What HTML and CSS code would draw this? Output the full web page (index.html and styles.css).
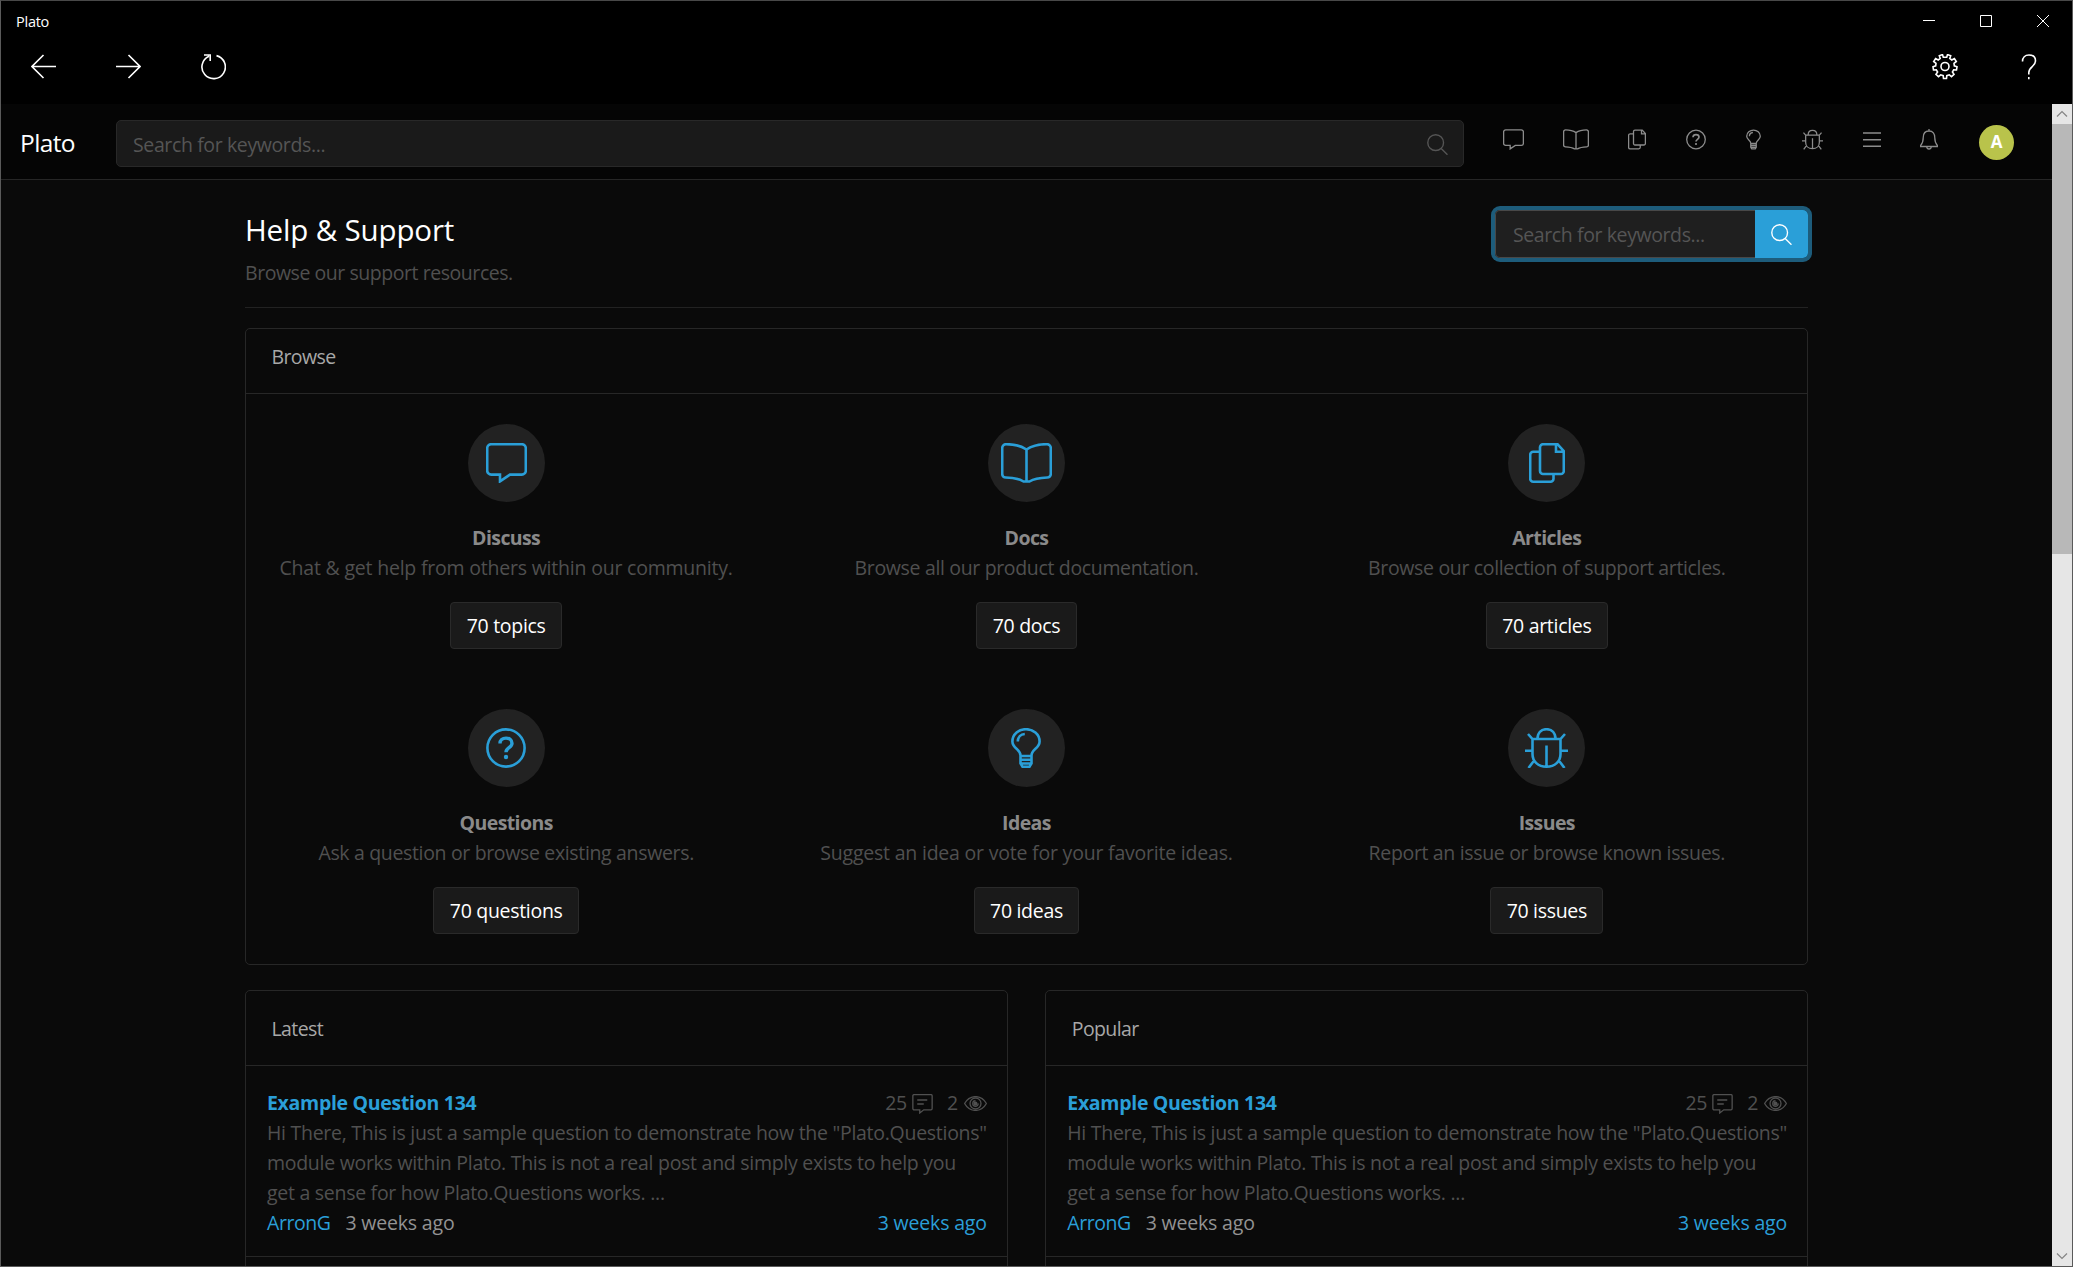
FILE: index.html
```html
<!DOCTYPE html>
<html lang="en">
<head>
<meta charset="utf-8">
<title>Plato</title>
<link rel="stylesheet" href="styles.css">
</head>
<body>
<svg class="sprite" aria-hidden="true">
  <symbol id="i-comment" viewBox="0 0 41 40"><path d="M5.2 1.2h30.6a4 4 0 0 1 4 4v22.4a4 4 0 0 1-4 4H24L14 38.4v-6.8H5.2a4 4 0 0 1-4-4V5.200a4 4 0 0 1 4-4z"/></symbol>
  <symbol id="i-book" viewBox="0 0 51 40"><path d="M25.500 6.500C20 2.800 14 1.200 5 1.200a3.800 3.800 0 0 0-3.800 3.800v26a3.500 3.500 0 0 0 3.500 3.500c7.300.3 13 1 17.800 4h6c4.800-3 10.500-3.700 17.800-4a3.500 3.500 0 0 0 3.500-3.500V5a3.800 3.800 0 0 0-3.800-3.800C37 1.200 31 2.800 25.500 6.500zV39"/></symbol>
  <symbol id="i-copy" viewBox="0 0 36 40"><path d="M14 1.200h14.500l6.300 6.800v20a3 3 0 0 1-3 3H14a3 3 0 0 1-3-3V4.200a3 3 0 0 1 3-3zM27 1.500V8.700h7.500M11 8.700H4.200a3 3 0 0 0-3 3v24a3 3 0 0 0 3 3H21.500a3 3 0 0 0 3-3V31"/></symbol>
  <symbol id="i-question" viewBox="0 0 40 40"><circle cx="20" cy="20" r="18.600"/><path class="heavy" d="M14 15.500c0-3.600 2.400-5.400 6-5.400s6 2 6 5.100c0 4.400-6 4.600-6 9"/><circle class="dot" cx="20" cy="29" r="2.200"/></symbol>
  <symbol id="i-bulb" viewBox="0 0 30 40"><path d="M9.500 27.500C9.500 21 1.400 20.500 1.400 13.500 1.400 6 8 1.200 15 1.200S28.600 6 28.600 13.500c0 7-8.100 7.500-8.100 14V35.500l-2 3.200h-7l-2-3.200zM9.500 28h11M9.500 31.800h11M9.500 35.500h11M6.800 13.500C6.800 9 9.800 6.300 13.800 6"/></symbol>
  <symbol id="i-bug" viewBox="0 0 43 40"><path d="M12.500 11C12.500 5 16 1.200 21.500 1.200S30.500 5 30.500 11M3 6l4.500 5h28L40 6M7.500 11v15c0 7.500 5.500 12.700 14 12.700s14-5.200 14-12.700V11M21.500 17.500v21M0 22.700h7.500M35.500 22.700H43M9.500 32.500 8 34l-4.500 6M33.500 32.500 35 34l4.500 6"/></symbol>
  <symbol id="i-list" viewBox="0 0 36 40"><path d="M0 7h36M0 20.500h36M0 33.500h36"/></symbol>
  <symbol id="i-bell" viewBox="0 0 36 42"><path d="M18 0v4M18 4C10 4 6.500 9.500 6.500 17S5 29 1.200 33v2h33.600v-2C31 29 29.500 24.500 29.500 17S26 4 18 4zM13.500 35c0 3 1.800 5 4.500 5s4.500-2 4.500-5"/></symbol>
  <symbol id="i-search" viewBox="0 0 40 40"><circle cx="16.500" cy="16.500" r="15"/><path d="M27 27.500 39 39.500"/></symbol>
  <symbol id="i-reply" viewBox="0 0 41 40"><path d="M3.700 1.200h33.600a2.500 2.500 0 0 1 2.500 2.500v25.400a2.500 2.500 0 0 1-2.500 2.500H23L15 38v-6.400H3.700a2.500 2.500 0 0 1-2.500-2.500V3.700a2.500 2.500 0 0 1 2.500-2.500zM10 12h20M10 20h13"/></symbol>
  <symbol id="i-eye" viewBox="0 0 46 30"><path d="M1.200 15C6 6.500 13.500 1.200 23 1.200S40 6.500 44.800 15C40 23.500 32.500 28.800 23 28.800S6 23.500 1.200 15z"/><circle cx="23" cy="15" r="11"/><path d="M23 9.500a5.500 5.500 0 1 0 5.500 5.500"/><circle class="dot" cx="23" cy="15" r="4"/></symbol>
</svg>

<div class="window">
  <header class="titlebar">
    <span class="titlebar-name">Plato</span>
    <div class="window-controls">
      <svg width="12" height="12"><path d="M0 5.500h12"/></svg>
      <svg width="12" height="12"><path d="M.5.5h11v11H.5z"/></svg>
      <svg width="12" height="12"><path d="M0 0l12 12M12 0L0 12"/></svg>
    </div>
  </header>
  <nav class="toolbar">
    <svg width="25" height="26"><path d="M25 12.500H1M12.500 1 1 12.500l11.500 11.500"/></svg>
    <svg width="25" height="26"><path d="M0 12.500h24M12.500 1 24 12.500 12.500 24"/></svg>
    <svg width="25" height="26"><path d="M15.500 1.600A11.700 11.700 0 1 1 8 2.200M3 1h6.200V7"/></svg>
    <svg class="gear" width="26" height="26" viewBox="-13 -12.500 26 26"><path d="M-1.700-9.200-2.500-11.900-5.700-10.700-4.800-8-6.800-6.500-9.400-7.900-11.300-5-9-3.200-9.300-.7-12 .2-11.500 3.500-8.700 3.300-7.400 5.500-9 7.900-6.500 10.100-4.300 8.300-1.800 9.200-1.500 12H1.500L1.800 9.200 4.300 8.300 6.500 10.100 9 7.900 7.400 5.500 8.700 3.300 11.500 3.500 12 .2 9.300-.7 9-3.200 11.300-5 9.400-7.900 6.800-6.500 4.800-8 5.700-10.700 2.500-11.900 1.700-9.200z"/><circle r="4"/></svg>
    <svg class="help" width="16" height="26"><path d="M1.500 7.500C1.500 3.500 4 1 8 1s6.500 2.400 6.500 6c0 5.500-6.700 5.600-6.700 11.500V20.500M7.800 23v2.200"/></svg>
  </nav>

  <div class="viewport">
    <div class="page">
      <header class="site-header">
        <a class="brand">Plato</a>
        <div class="site-search"><span>Search for keywords...</span><svg class="icon" width="21" height="21"><use href="#i-search"/></svg></div>
        <nav class="site-nav">
          <svg class="icon" width="21" height="21"><use href="#i-comment"/></svg>
          <svg class="icon" width="26" height="21"><use href="#i-book"/></svg>
          <svg class="icon" width="18" height="21"><use href="#i-copy"/></svg>
          <svg class="icon" width="20" height="21"><use href="#i-question"/></svg>
          <svg class="icon" width="15" height="21"><use href="#i-bulb"/></svg>
          <svg class="icon" width="21" height="21"><use href="#i-bug"/></svg>
          <svg class="icon" width="18" height="21"><use href="#i-list"/></svg>
          <svg class="icon" width="18" height="21"><use href="#i-bell"/></svg>
        </nav>
        <span class="avatar">A</span>
      </header>

      <main class="content">
        <section class="page-head">
          <div>
            <h1>Help &amp; Support</h1>
            <p class="lead">Browse our support resources.</p>
          </div>
          <div class="search-group"><span class="search-field">Search for keywords...</span><span class="search-button"><svg class="icon" width="21" height="21"><use href="#i-search"/></svg></span></div>
        </section>

        <section class="card browse">
          <h2 class="card-header">Browse</h2>
          <div class="tiles">
            <div class="tile"><span class="disc"><svg class="icon" width="41" height="40"><use href="#i-comment"/></svg></span><h3>Discuss</h3><p>Chat &amp; get help from others within our community.</p><a class="button">70 topics</a></div>
            <div class="tile"><span class="disc"><svg class="icon" width="51" height="40"><use href="#i-book"/></svg></span><h3>Docs</h3><p class="snug">Browse all our product documentation.</p><a class="button">70 docs</a></div>
            <div class="tile"><span class="disc"><svg class="icon" width="36" height="40"><use href="#i-copy"/></svg></span><h3>Articles</h3><p class="snug">Browse our collection of support articles.</p><a class="button">70 articles</a></div>
            <div class="tile"><span class="disc"><svg class="icon" width="40" height="40"><use href="#i-question"/></svg></span><h3>Questions</h3><p class="snug">Ask a question or browse existing answers.</p><a class="button">70 questions</a></div>
            <div class="tile"><span class="disc"><svg class="icon" width="30" height="40"><use href="#i-bulb"/></svg></span><h3>Ideas</h3><p>Suggest an idea or vote for your favorite ideas.</p><a class="button">70 ideas</a></div>
            <div class="tile"><span class="disc"><svg class="icon" width="43" height="40"><use href="#i-bug"/></svg></span><h3>Issues</h3><p class="snug">Report an issue or browse known issues.</p><a class="button">70 issues</a></div>
          </div>
        </section>

        <div class="feeds">
          <section class="card feed">
            <h2 class="card-header">Latest</h2>
            <article class="post">
              <div class="post-row"><a class="post-title">Example Question 134</a><span class="stats">25<svg class="icon reply" width="21" height="20"><use href="#i-reply"/></svg>2<svg class="icon eye" width="23" height="15"><use href="#i-eye"/></svg></span></div>
              <p>Hi There, This is just a sample question to demonstrate how the "Plato.Questions"<br>module works within Plato. This is not a real post and simply exists to help you<br>get a sense for how Plato.Questions works. ...</p>
              <div class="post-row"><span><a class="author">ArronG</a><span class="when">3 weeks ago</span></span><a class="loose">3 weeks ago</a></div>
            </article>
          </section>
          <section class="card feed">
            <h2 class="card-header">Popular</h2>
            <article class="post">
              <div class="post-row"><a class="post-title">Example Question 134</a><span class="stats">25<svg class="icon reply" width="21" height="20"><use href="#i-reply"/></svg>2<svg class="icon eye" width="23" height="15"><use href="#i-eye"/></svg></span></div>
              <p>Hi There, This is just a sample question to demonstrate how the "Plato.Questions"<br>module works within Plato. This is not a real post and simply exists to help you<br>get a sense for how Plato.Questions works. ...</p>
              <div class="post-row"><span><a class="author">ArronG</a><span class="when">3 weeks ago</span></span><a class="loose">3 weeks ago</a></div>
            </article>
          </section>
        </div>
      </main>
    </div>
    <div class="scrollbar">
      <svg width="20" height="20"><path d="M5 12.500 10 7.500l5 5"/></svg>
      <span class="thumb"></span>
      <svg class="down" width="20" height="20"><path d="M5 7.500l5 5 5-5"/></svg>
    </div>
  </div>
</div>
</body>
</html>
```
FILE: styles.css
```css
* { box-sizing: border-box; }
body {
  margin: 0;
  height: 1267px;
  overflow: hidden;
  background: #000;
  color: #939393;
  font: 19.5px/30px "Open Sans", "Noto Sans", sans-serif;
  letter-spacing: -0.3px;
}
h1, h2, h3, p { margin: 0; font-size: inherit; font-weight: 400; }
svg { display: block; fill: none; flex: none; }
.sprite { position: absolute; width: 0; height: 0; }
.icon { stroke: currentColor; stroke-width: 2.6; }
.heavy { stroke-width: 3.4; }
.dot { fill: currentColor; stroke: none; }
a { color: #2a9fd8; }

.window {
  display: flex;
  flex-direction: column;
  height: 1267px;
  border: 1px solid #5a5a5a;
  border-top-color: #484848;
}

/* Window chrome */
.titlebar {
  display: flex;
  justify-content: space-between;
  height: 40px;
  padding: 5px 23px 0 15px;
  color: #fff;
  font-size: 14.5px;
}
.titlebar-name { line-height: 32px; letter-spacing: -0.25px; }
.window-controls { display: flex; gap: 45px; padding-top: 9px; }
.window-controls svg { stroke: #fff; stroke-width: 1; }
.toolbar {
  display: flex;
  gap: 60px;
  height: 63px;
  padding: 13px 35px 0 30px;
}
.toolbar svg { stroke: #fff; stroke-width: 1.6; }
.toolbar .gear { margin-left: auto; }
.toolbar .help { margin-left: 3px; }

.viewport { display: flex; flex: 1; min-height: 0; }
.page { flex: 1; min-width: 0; overflow: hidden; background: #0a0a0a; }
.scrollbar { display: flex; flex-direction: column; width: 20px; background: #e6e6e6; }
.scrollbar svg { stroke: #858585; stroke-width: 1.2; }
.thumb { height: 430px; background: #b8b8b8; }
.scrollbar .down { margin-top: auto; }

/* Site header */
.site-header {
  display: flex;
  height: 76px;
  padding: 16px 38px 0 19px;
  background: #050505;
  border-bottom: 1px solid #262626;
}
.brand {
  width: 96px;
  color: #fff;
  font-size: 24.500px;
  line-height: 45px;
  letter-spacing: -0.6px;
}
.site-search {
  display: flex;
  justify-content: space-between;
  width: 1348px;
  height: 47px;
  padding: 13px 15px 0 16px;
  border: 1px solid #282828;
  border-radius: 5px;
  background: #1a1a1a;
  color: #555;
  letter-spacing: -0.38px;
}
.site-search span { line-height: 22px; }
.site-nav { display: flex; gap: 39.700px; margin: 9px 0 0 39px; color: #8c8c8c; }
.site-nav .icon:nth-child(2) { margin-left: -1px; }
.site-nav .icon:nth-child(6) { margin-left: 1.600px; }
.avatar {
  width: 35px;
  height: 35px;
  margin: 5px 0 0 auto;
  border-radius: 50%;
  background: #b9c34b;
  color: #fff;
  font-size: 17px;
  font-weight: 700;
  line-height: 34px;
  text-align: center;
}

/* Page heading */
.content { width: 1563px; margin: 0 auto; }
.page-head {
  display: flex;
  justify-content: space-between;
  height: 128px;
  padding-top: 30px;
  border-bottom: 1px solid #222;
}
h1 { color: #fff; font-size: 29.500px; line-height: 40px; letter-spacing: -0.15px; }
.lead { color: #505050; margin-top: 8px; line-height: 30px; letter-spacing: -0.45px; }
.search-group {
  display: flex;
  height: 48px;
  border-radius: 5px;
  box-shadow: 0 0 0 4px #1d5c7b;
}
.search-field {
  width: 260px;
  padding-left: 17px;
  border: 1px solid #484848;
  border-right: 0;
  border-radius: 5px 0 0 5px;
  background: #1f1f1f;
  color: #555;
  line-height: 48px;
  letter-spacing: -0.4px;
}
.search-button {
  display: flex;
  align-items: center;
  justify-content: center;
  width: 53px;
  border-radius: 0 5px 5px 0;
  background: #2a9fd8;
  color: #fff;
}

/* Cards */
.card { border: 1px solid #272727; border-radius: 5px; }
.card-header { padding-left: 25.500px; border-bottom: 1px solid #272727; color: #a8a8a8; letter-spacing: -0.6px; }
.browse { height: 637px; margin-top: 20px; }
.browse .card-header { height: 65px; line-height: 56px; }
.tiles { display: grid; grid-template-columns: repeat(3, 1fr); grid-auto-rows: 285px; padding-top: 30px; }
.tile { display: flex; flex-direction: column; align-items: center; }
.disc {
  display: flex;
  align-items: center;
  justify-content: center;
  width: 77px;
  height: 78px;
  border-radius: 50%;
  background: #222;
  color: #2a9fd8;
}
.tile h3 { margin-top: 21px; color: #8a8a8a; font-weight: 700; letter-spacing: -0.6px; }
.tile p { color: #505050; letter-spacing: -0.21px; }
.tile .snug { letter-spacing: -0.34px; }
.button {
  height: 47px;
  margin-top: 19px;
  padding: 0 15.300px;
  border: 1px solid #2a2a2a;
  border-radius: 4px;
  background: #1a1a1a;
  color: #fff;
  line-height: 46px;
}

/* Question feeds */
.feeds { display: grid; grid-template-columns: 1fr 1fr; gap: 37.500px; margin-top: 25px; }
.feed { height: 400px; }
.feed .card-header { height: 75px; line-height: 76px; }
.post { height: 191px; padding: 22px 20px 0 21px; border-bottom: 1px solid #272727; }
.post p { color: #505050; white-space: nowrap; letter-spacing: -0.28px; }
.post-row { display: flex; justify-content: space-between; }
.post-title { font-weight: 700; }
.author { letter-spacing: -0.45px; }
.loose { letter-spacing: -0.18px; }
.stats { display: flex; align-items: center; color: #505050; }
.reply { margin: 1px 14px 0 5px; }
.eye { margin-left: 6px; }
.when { margin-left: 15px; letter-spacing: -0.18px; }
```
